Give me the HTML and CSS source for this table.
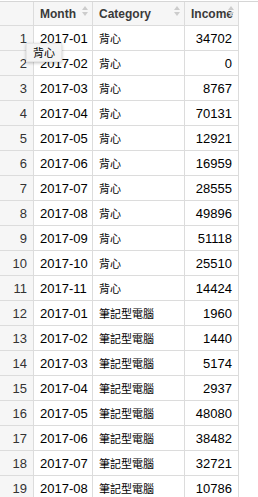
FILE: index.html
```html
<!DOCTYPE html>
<html>
<head>
<meta charset="utf-8">
<link rel="stylesheet" href="styles.css">
</head>
<body>
<div class="wrap">
<table class="grid">
<thead>
<tr>
<th class="rn"></th>
<th class="hc w-month"><span>Month</span><i class="sort"></i></th>
<th class="hc w-cat"><span>Category</span><i class="sort"></i></th>
<th class="hc w-inc"><span>Income</span><i class="sort"></i></th>
</tr>
</thead>
<tbody>
<tr><td class="rn">1</td><td>2017-01</td><td class="cat">背心</td><td class="num">34702</td></tr>
<tr><td class="rn">2</td><td>2017-02</td><td class="cat">背心</td><td class="num">0</td></tr>
<tr><td class="rn">3</td><td>2017-03</td><td class="cat">背心</td><td class="num">8767</td></tr>
<tr><td class="rn">4</td><td>2017-04</td><td class="cat">背心</td><td class="num">70131</td></tr>
<tr><td class="rn">5</td><td>2017-05</td><td class="cat">背心</td><td class="num">12921</td></tr>
<tr><td class="rn">6</td><td>2017-06</td><td class="cat">背心</td><td class="num">16959</td></tr>
<tr><td class="rn">7</td><td>2017-07</td><td class="cat">背心</td><td class="num">28555</td></tr>
<tr><td class="rn">8</td><td>2017-08</td><td class="cat">背心</td><td class="num">49896</td></tr>
<tr><td class="rn">9</td><td>2017-09</td><td class="cat">背心</td><td class="num">51118</td></tr>
<tr><td class="rn">10</td><td>2017-10</td><td class="cat">背心</td><td class="num">25510</td></tr>
<tr><td class="rn">11</td><td>2017-11</td><td class="cat">背心</td><td class="num">14424</td></tr>
<tr><td class="rn">12</td><td>2017-01</td><td class="cat">筆記型電腦</td><td class="num">1960</td></tr>
<tr><td class="rn">13</td><td>2017-02</td><td class="cat">筆記型電腦</td><td class="num">1440</td></tr>
<tr><td class="rn">14</td><td>2017-03</td><td class="cat">筆記型電腦</td><td class="num">5174</td></tr>
<tr><td class="rn">15</td><td>2017-04</td><td class="cat">筆記型電腦</td><td class="num">2937</td></tr>
<tr><td class="rn">16</td><td>2017-05</td><td class="cat">筆記型電腦</td><td class="num">48080</td></tr>
<tr><td class="rn">17</td><td>2017-06</td><td class="cat">筆記型電腦</td><td class="num">38482</td></tr>
<tr><td class="rn">18</td><td>2017-07</td><td class="cat">筆記型電腦</td><td class="num">32721</td></tr>
<tr><td class="rn">19</td><td>2017-08</td><td class="cat">筆記型電腦</td><td class="num">10786</td></tr>
</tbody>
</table>
<div class="tip">背心</div>
</div>
</body>
</html>
```
FILE: styles.css
```css
html, body {
  margin: 0;
  padding: 0;
  background: #fff;
}
body {
  font-family: "Liberation Sans", Arial, "Noto Sans CJK TC", sans-serif;
  font-size: 13px;
  color: #000;
}
.wrap {
  position: relative;
  border-top: 1px solid #d6d6d6;
  margin-top: 1px;
  width: 258px;
  overflow: hidden;
}
.grid {
  border-collapse: collapse;
  table-layout: fixed;
  width: 239px;
}
.grid th, .grid td {
  border: 1px solid #dcdcdc;
  padding: 0 6px;
  white-space: nowrap;
  overflow: hidden;
}
.grid tr > :first-child {
  border-left: none;
}
.grid thead tr > * {
  border-top: none;
}
.grid th {
  height: 23px;
  background: #f6f6f6;
  text-align: left;
  font-weight: bold;
  font-size: 12px;
  color: #3a3a3a;
  position: relative;
  overflow: visible;
}
.grid td {
  height: 24px;
}
.grid th.rn, .grid td.rn {
  width: 21px;
  background: #f6f6f6;
  text-align: right;
  color: #333;
}
.grid td.cat {
  font-family: "Noto Sans CJK TC", "Liberation Sans", sans-serif;
  font-size: 11px;
}
.w-month { width: 46px; }
.w-cat { width: 79px; }
.w-inc { width: 41px; }
.num { text-align: right; }
.sort {
  position: absolute;
  right: 3px;
  top: 4px;
  width: 7px;
  height: 12px;
}
.sort::before, .sort::after {
  content: "";
  position: absolute;
  left: 0;
  border-left: 3px solid transparent;
  border-right: 3px solid transparent;
}
.sort::before {
  top: 0;
  border-bottom: 4px solid #ccc;
}
.sort::after {
  top: 6px;
  border-top: 4px solid #ccc;
}
.tip {
  position: absolute;
  left: 26px;
  top: 41px;
  padding: 2px 6px;
  background: #f4f4f4;
  border: 1px solid #e6e6e6;
  box-shadow: 0 1px 3px rgba(0,0,0,0.25);
  font-family: "Noto Sans CJK TC", sans-serif;
  font-size: 11px;
  line-height: 13px;
}
```
